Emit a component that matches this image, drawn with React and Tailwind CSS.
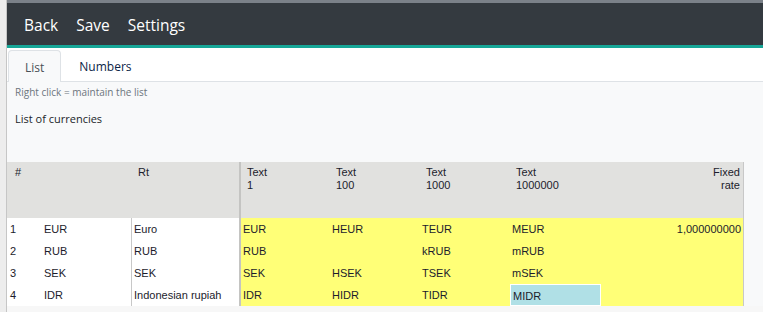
import React from 'react';

const rows = [
  { n: '1', code: 'EUR', rt: 'Euro', t1: 'EUR', t100: 'HEUR', t1000: 'TEUR', t1m: 'MEUR', rate: '1,000000000' },
  { n: '2', code: 'RUB', rt: 'RUB', t1: 'RUB', t100: '', t1000: 'kRUB', t1m: 'mRUB', rate: '' },
  { n: '3', code: 'SEK', rt: 'SEK', t1: 'SEK', t100: 'HSEK', t1000: 'TSEK', t1m: 'mSEK', rate: '' },
  { n: '4', code: 'IDR', rt: 'Indonesian rupiah', t1: 'IDR', t100: 'HIDR', t1000: 'TIDR', t1m: 'MIDR', rate: '', sel: true },
];

const cols = 'grid grid-cols-[34px_90px_108px_92px_90px_90px_90px_142px]';

const App = () => {
  return (
    <div className="flex w-[763px] h-[312px] overflow-hidden bg-[#f8f9fa] font-['Open_Sans',sans-serif]">
      {/* left strip */}
      <div className="w-[7px] shrink-0 bg-[#ededed] border-r border-[#c6c6c6]" />

      <div className="flex-1 flex flex-col min-w-0">
        <div className="h-[3px] bg-[#7b8189]" />

        {/* Header */}
        <header className="h-[42px] pt-[3px] bg-[#343a40] flex items-center gap-[18px] pl-[17px] text-white text-[15.5px]">
          <span>Back</span>
          <span>Save</span>
          <span>Settings</span>
        </header>
        <div className="h-[3px] bg-[#16a697]" />

        {/* Tabs */}
        <div className="h-[34px] bg-white border-b border-[#dee2e6] flex items-end pl-[1px] text-[12px]">
          <div className="h-[32px] -mb-[1px] pt-[3px] px-4 flex items-center bg-[#f8f9fa] border border-b-0 border-[#dee2e6] rounded-t-[4px] text-[#495057]">
            List
          </div>
          <div className="h-[32px] pt-[3px] pl-[18px] flex items-center text-[#0b2447]">Numbers</div>
        </div>

        {/* Content */}
        <div className="flex-1 flex flex-col">
          <div className="pl-2 mt-[3px] text-[10px] leading-[14px] text-[#6c757d]">Right click = maintain the list</div>
          <div className="pl-2 mt-[12px] text-[11px] leading-[16px] text-[#212529]">List of currencies</div>

          <div className="mt-[35px] w-[737px] border-r border-[#c8c8c8] font-['Liberation_Sans',Arial,sans-serif] text-[11px] text-[#1c1c2c]">
            {/* table header */}
            <div className={`${cols} h-[56px] bg-[#e1e1df] leading-[13px]`}>
              <div className="pl-[8px] pt-[4px]">#</div>
              <div />
              <div className="pl-[7px] pt-[4px]">Rt</div>
              <div className="border-l-2 border-[#c4c4c2] pl-[6px] pt-[4px]">Text<br />1</div>
              <div className="pl-[5px] pt-[4px]">Text<br />100</div>
              <div className="pl-[5px] pt-[4px]">Text<br />1000</div>
              <div className="pl-[5px] pt-[4px]">Text<br />1000000</div>
              <div className="pr-[3px] pt-[4px] text-right">Fixed<br />rate</div>
            </div>

            {rows.map((r) => (
              <div key={r.n} className={`${cols} h-[22px] leading-[22px]`}>
                <div className="bg-white pl-[3px]">{r.n}</div>
                <div className="bg-white pl-[3px]">{r.code}</div>
                <div className="bg-white border-l border-[#c8c8c8] pl-[2px]">{r.rt}</div>
                <div className="bg-[#ffff77] border-l-2 border-[#c4c4c2] pl-[2px]">{r.t1}</div>
                <div className="bg-[#ffff77] pl-[1px]">{r.t100}</div>
                <div className="bg-[#ffff77] pl-[1px]">{r.t1000}</div>
                {r.sel ? (
                  <div className="bg-[#ffff77]">
                    <div className="-ml-[1px] h-[22px] bg-[#b0e0e6] border border-white pl-[2px] leading-[21px] pt-[1px]">{r.t1m}</div>
                  </div>
                ) : (
                  <div className="bg-[#ffff77] pl-[1px]">{r.t1m}</div>
                )}
                <div className="bg-[#ffff77] text-right pr-[2px]">{r.rate}</div>
              </div>
            ))}
          </div>
          <div className="flex-1 bg-[#f7f7f7]" />
        </div>
      </div>
    </div>
  );
};

export default App;
